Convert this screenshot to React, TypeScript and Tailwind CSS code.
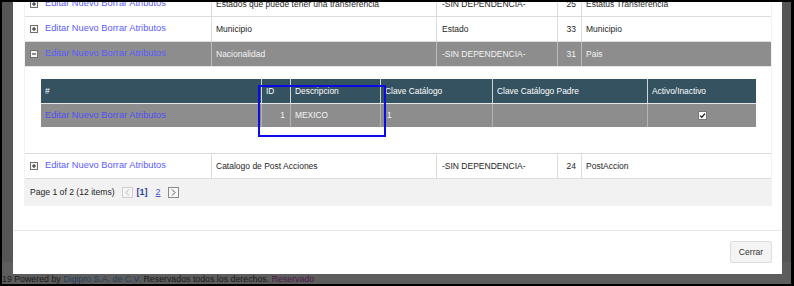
import React from "react";

function ExpandBox({ minus = false }: { minus?: boolean }) {
  return (
    <svg width="8" height="8" viewBox="0 0 8 8" className="shrink-0">
      <rect x="0.5" y="0.5" width="7" height="7" fill="#f7f7f7" stroke="#6f6f6f" />
      <line x1="2" y1="4" x2="6" y2="4" stroke="#222" strokeWidth="1" />
      {!minus && <line x1="4" y1="2" x2="4" y2="6" stroke="#222" strokeWidth="1" />}
    </svg>
  );
}

function Check() {
  return (
    <svg width="9" height="9" viewBox="0 0 9 9">
      <rect x="0.5" y="0.5" width="8" height="8" fill="#fafafa" stroke="#777" />
      <path d="M2 4.6 L3.8 6.3 L7 2.6" fill="none" stroke="#222" strokeWidth="1.3" />
    </svg>
  );
}

type RowProps = {
  c2: string;
  c3: string;
  c4: string;
  c5: string;
  selected?: boolean;
};

function Row({ c2, c3, c4, c5, selected = false }: RowProps) {
  const bg = selected ? "bg-[#8d8d8d] text-[#f3f3f3]" : "bg-white text-[#1e1e1e]";
  const bd = selected ? "border-[#b9b9b9]" : "border-[#dcdcdc]";
  return (
    <div className={`flex h-[25px] border-b ${selected ? "border-[#e4e4e4]" : "border-[#dcdcdc]"} ${bg} text-[8.5px]`}>
      <div className={`w-[187px] border-r ${bd} flex items-center pl-[5px] gap-[7px]`}>
        <ExpandBox minus={selected} />
        <span className="text-[9.3px] text-[#5b5bff] whitespace-nowrap">Editar Nuevo Borrar Atributos</span>
      </div>
      <div className={`w-[225px] border-r ${bd} flex items-center pl-[4px] whitespace-nowrap`}>{c2}</div>
      <div className={`w-[121px] border-r ${bd} flex items-center pl-[5px] whitespace-nowrap`}>{c3}</div>
      <div className={`w-[24px] border-r ${bd} flex items-center justify-end pr-[5px]`}>{c4}</div>
      <div className="flex-1 flex items-center pl-[4px] whitespace-nowrap">{c5}</div>
    </div>
  );
}

function DetailRow() {
  const head = "flex items-center pl-[4px] border-r border-[#cfd6d9] h-full";
  const cell = "flex items-center border-r border-[#b3b3b3] h-full";
  return (
    <div className="h-[87px] border-b border-[#dcdcdc] bg-white pt-[12px] pl-[16px]">
      <div className="relative w-[715px] text-[8.4px]">
        <div className="flex h-[25px] bg-[#34525f] text-white border-b border-[#e6e6e6]">
          <div className={`${head} w-[221px]`}>#</div>
          <div className={`${head} w-[29px]`}>ID</div>
          <div className={`${head} w-[90px]`}>Descripcion</div>
          <div className={`${head} w-[112px]`}>Clave Catálogo</div>
          <div className={`${head} w-[155px]`}>Clave Catálogo Padre</div>
          <div className="flex items-center pl-[4px] h-full flex-1">Activo/Inactivo</div>
        </div>
        <div className="flex h-[23px] bg-[#8d8d8d] text-[#f5f5f5]">
          <div className={`${cell} w-[221px] pl-[4px]`}>
            <span className="text-[9.3px] text-[#5050f5] whitespace-nowrap">Editar Nuevo Borrar Atributos</span>
          </div>
          <div className={`${cell} w-[29px] justify-end pr-[5px]`}>1</div>
          <div className={`${cell} w-[90px] pl-[4px]`}>MEXICO</div>
          <div className={`${cell} w-[112px] pl-[6px]`}>1</div>
          <div className={`${cell} w-[155px]`}></div>
          <div className="flex items-center justify-center h-full flex-1 pl-[1px]">
            <Check />
          </div>
        </div>
        <div className="absolute left-[217px] top-[6px] w-[128px] h-[52px] border-2 border-[#0b0be8]" />
      </div>
    </div>
  );
}

function Pager() {
  return (
    <div className="h-[27px] flex items-center pl-[5px] text-[8.6px] text-[#1e1e1e]">
      <span className="whitespace-nowrap">Page 1 of 2 (12 items)</span>
      <span className="ml-[7px] w-[11px] h-[11px] border border-[#cfcfcf] bg-[#f6f6f6] flex items-center justify-center">
        <svg width="5" height="7" viewBox="0 0 5 7">
          <path d="M4 0.5 L1 3.5 L4 6.5" fill="none" stroke="#b0b0b0" strokeWidth="1" />
        </svg>
      </span>
      <span className="ml-[4px] font-bold text-[#2c3f9c] text-[9px]">[1]</span>
      <span className="ml-[8px] underline text-[#3b55c8] text-[9px]">2</span>
      <span className="ml-[7px] w-[11px] h-[11px] border border-[#8a8a8a] bg-[#f6f6f6] flex items-center justify-center">
        <svg width="5" height="7" viewBox="0 0 5 7">
          <path d="M1 0.5 L4 3.5 L1 6.5" fill="none" stroke="#555" strokeWidth="1" />
        </svg>
      </span>
    </div>
  );
}

export default function App() {
  return (
    <div
      className="w-[794px] h-[286px] overflow-hidden border-black border-t-2 border-l-2 border-r-[3px] border-b-2 bg-[linear-gradient(to_bottom,#565656_260px,#5d5d5d_260px)] flex flex-col"
      style={{ fontFamily: '"Liberation Sans", Arial, sans-serif' }}
    >
      <div className="ml-[11px] w-[769px] h-[272px] shrink-0 bg-white overflow-hidden flex flex-col">
        <div className="mt-[-10px] ml-[11px] w-[748px] bg-[#f2f2f2] px-[1px]">
          <Row c2="Estados que puede tener una transferencia" c3="-SIN DEPENDENCIA-" c4="25" c5="Estatus Transferencia" />
          <Row c2="Municipio" c3="Estado" c4="33" c5="Municipio" />
          <Row c2="Nacionalidad" c3="-SIN DEPENDENCIA-" c4="31" c5="Pais" selected />
          <DetailRow />
          <Row c2="Catalogo de Post Acciones" c3="-SIN DEPENDENCIA-" c4="24" c5="PostAccion" />
          <Pager />
        </div>
        <div className="h-[24px] shrink-0" />
        <div className="border-t border-[#e8e8e8] pt-[10px] pb-[11px] pr-[10px] flex justify-end">
          <button className="w-[42px] h-[22px] bg-[#f4f4f4] border border-[#dddddd] rounded-[2px] text-[8.6px] text-[#333]">
            Cerrar
          </button>
        </div>
      </div>
      <div className="h-[10px] leading-[10px] text-[8.8px] whitespace-nowrap text-[#1a1a1a]">
        19 Powered by <span className="text-[#23405e]">Digipro S.A. de C.V.</span> Reservados todos los derechos.{" "}
        <span className="text-[#4d1848]">Reservado</span>
      </div>
    </div>
  );
}
